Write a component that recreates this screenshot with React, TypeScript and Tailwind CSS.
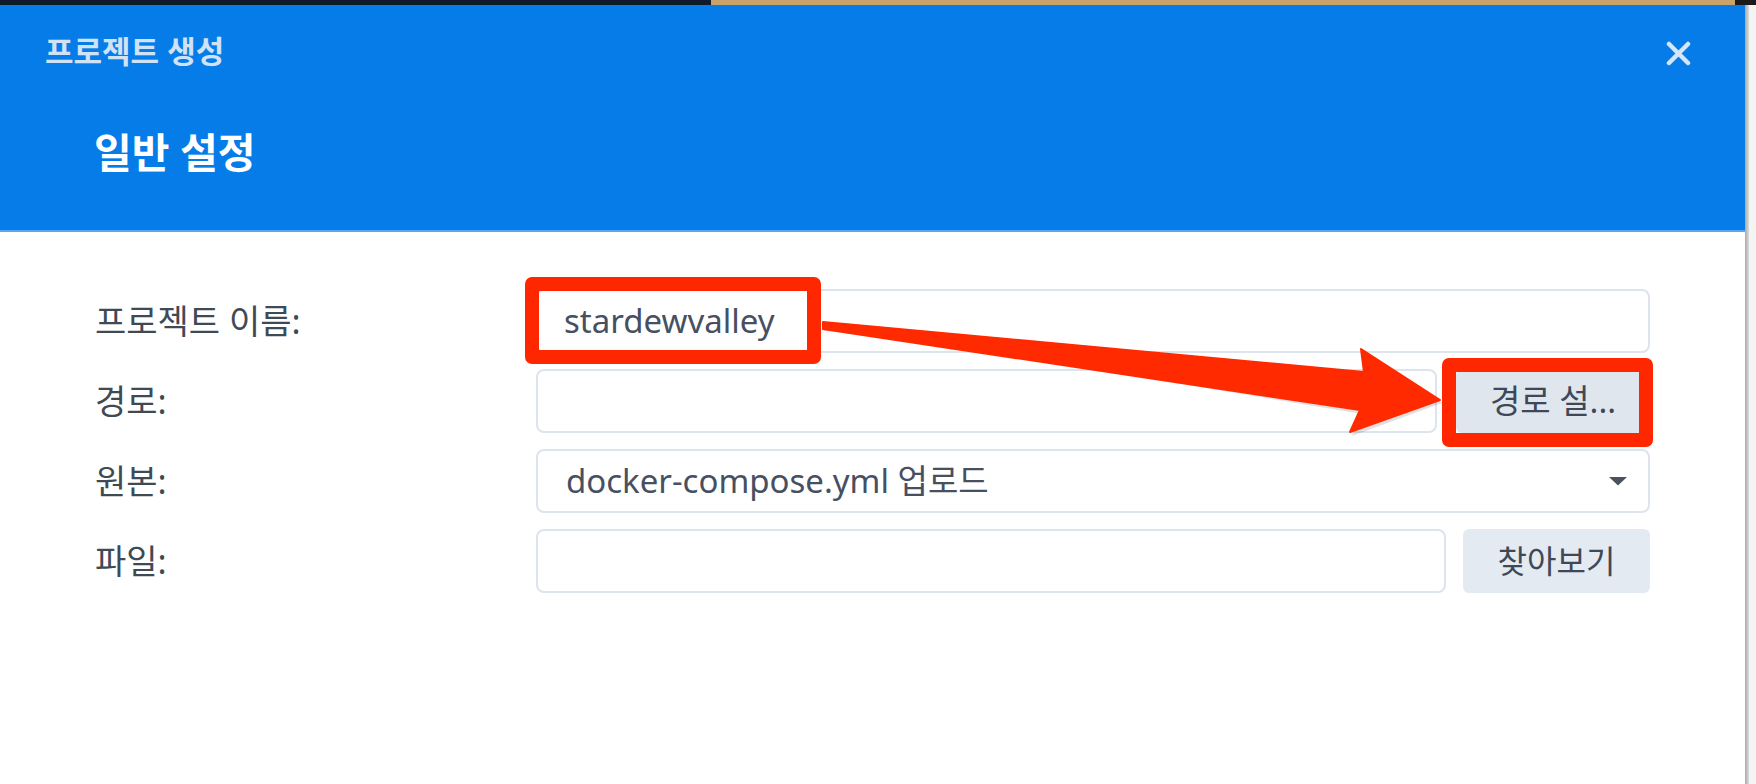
export default function App() {
  return (
    <div className="relative w-[1756px] h-[784px] overflow-hidden bg-white flex flex-col font-['Noto_Sans','Noto_Sans_CJK_KR',sans-serif]">
      {/* top strip (background behind the dialog) */}
      <div className="h-[5px] flex shrink-0">
        <div className="w-[711px] bg-[#0f1a2b]" />
        <div className="flex-1 bg-[#c9a36a]" />
        <div className="w-[21px] bg-[#1a1a1a]" />
      </div>

      <div className="flex flex-1">
        {/* dialog */}
        <div className="w-[1745px] flex flex-col">
          {/* header */}
          <div className="h-[227px] bg-[#067ce8] border-b-2 border-[#58a8f1] flex flex-col shrink-0">
            <div className="flex items-start justify-between pl-[45px] pr-[54px] pt-[26px]">
              <span className="text-[31px] leading-[40px] font-semibold text-[#cfe2f6]">프로젝트 생성</span>
              <svg width="25" height="25" viewBox="0 0 25 25" className="mt-[10px]">
                <path d="M3 3 L22 22 M22 3 L3 22" stroke="#d4e6f8" strokeWidth="4.5" strokeLinecap="round" fill="none" />
              </svg>
            </div>
            <div className="pl-[94px] mt-[56px]">
              <span className="text-[41px] leading-[50px] font-bold text-white">일반 설정</span>
            </div>
          </div>

          {/* body */}
          <div className="flex-1 bg-white pt-[57px] pl-[95px] pr-[95px] flex flex-col gap-[16px]">
            <div className="flex items-center h-[64px]">
              <div className="w-[441px] text-[34px] text-[#404a55]">프로젝트 이름:</div>
              <div className="flex-1 h-full border-2 border-[#dde4ed] rounded-[8px] bg-white flex items-center pl-[26px] text-[33px] text-[#465062]">
                stardewvalley
              </div>
            </div>

            <div className="flex items-center h-[64px]">
              <div className="w-[441px] text-[34px] text-[#404a55]">경로:</div>
              <div className="flex-1 h-full border-2 border-[#dde4ed] rounded-[8px] bg-white" />
              <div className="w-[194px] ml-[19px] h-full rounded-[6px] bg-[#dfe6ee] flex items-center justify-center text-[33px] text-[#3f4856]">
                경로 설...
              </div>
            </div>

            <div className="flex items-center h-[64px]">
              <div className="w-[441px] text-[34px] text-[#404a55]">원본:</div>
              <div className="flex-1 h-full border-2 border-[#dde4ed] rounded-[8px] bg-white flex items-center justify-between pl-[28px] pr-[20px] text-[33px] text-[#465062]">
                <span>docker-compose.yml 업로드</span>
                <svg width="20" height="10" viewBox="0 0 20 10">
                  <path d="M1 1 L19 1 L10 9.5 Z" fill="#4a5260" />
                </svg>
              </div>
            </div>

            <div className="flex items-center h-[64px]">
              <div className="w-[441px] text-[34px] text-[#404a55]">파일:</div>
              <div className="flex-1 h-full border-2 border-[#dde4ed] rounded-[8px] bg-white" />
              <div className="w-[187px] ml-[17px] h-full rounded-[6px] bg-[#e4eaf1] flex items-center justify-center text-[32px] text-[#3f4856]">
                찾아보기
              </div>
            </div>
          </div>
        </div>

        {/* right edge shadow strip */}
        <div className="flex-1 flex">
          <div className="w-[4px] bg-gradient-to-r from-[#a9a9a9] to-[#dcdcdc]" />
          <div className="flex-1 bg-[#f4f4f4]" />
        </div>
      </div>

      {/* annotation: red boxes */}
      <div className="absolute left-[525px] top-[277px] w-[296px] h-[87px] border-[14px] border-[#ff2700] rounded-[7px]" />
      <div className="absolute left-[1442px] top-[358px] w-[211px] h-[89px] border-[14px] border-[#ff2700] rounded-[7px]" />

      {/* annotation: arrow */}
      <svg className="absolute left-0 top-0" width="1756" height="784" viewBox="0 0 1756 784">
        <polygon
          points="824,325 1362,414 1352,436 1442,403 1363,352 1366,376 824,331"
          fill="#000"
          opacity="0.12"
        />
        <polygon
          points="823,322 1364,372 1361,349 1440,400 1350,432 1360,410 823,329"
          fill="#ff2a00"
          stroke="#ff2a00"
          strokeWidth="2"
          strokeLinejoin="round"
        />
      </svg>
    </div>
  );
}
